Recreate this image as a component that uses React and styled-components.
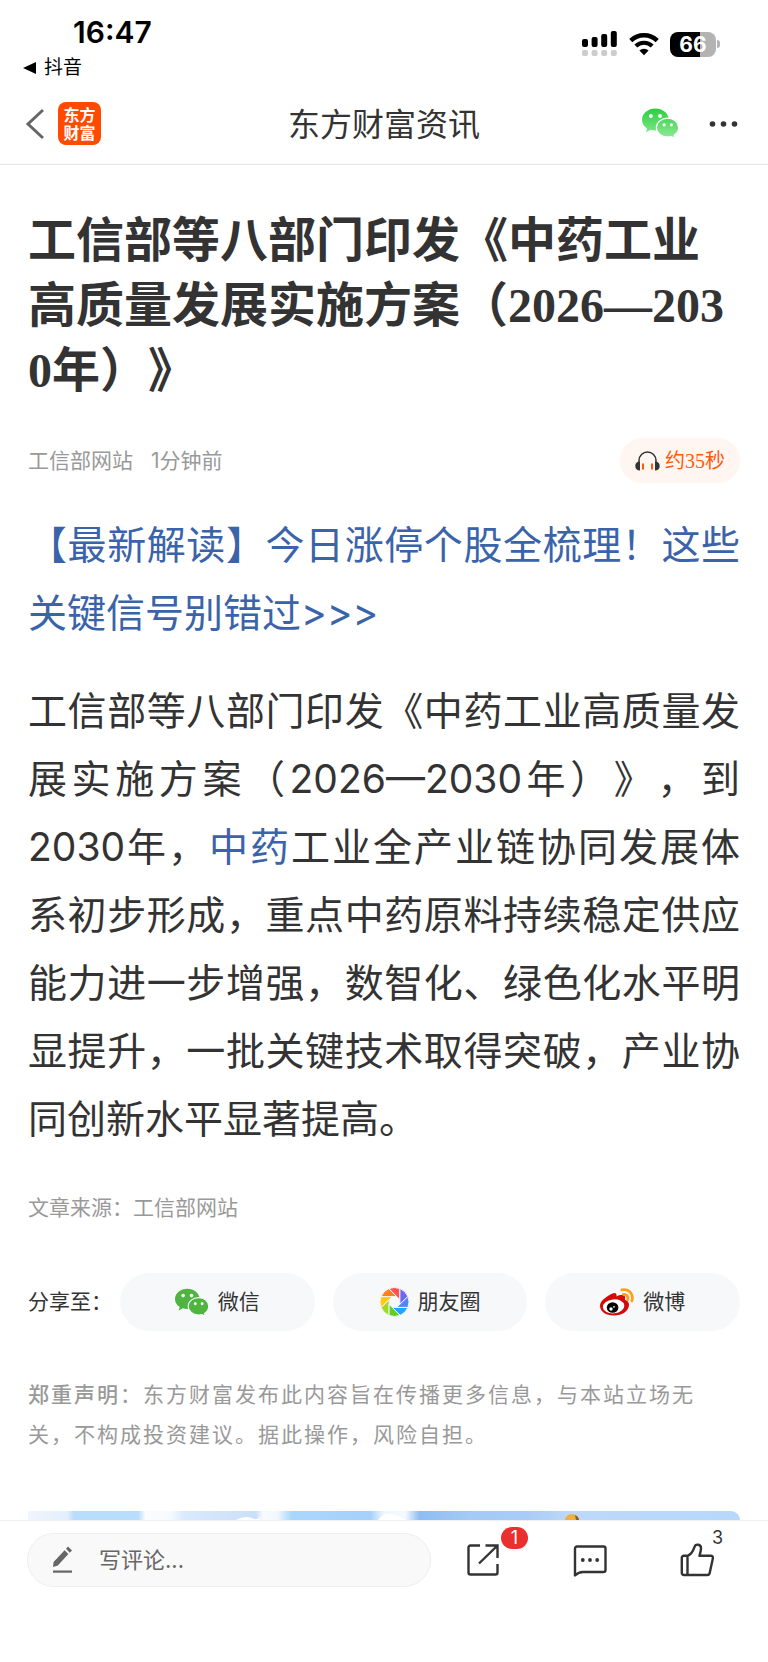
import React, { useState } from 'react';
import styled, { createGlobalStyle } from 'styled-components';

const GlobalStyle = createGlobalStyle`
  * {
    box-sizing: border-box;
  }

  body {
    margin: 0;
    background: #fff;
    color: #333;
    font-family: Inter, 'Noto Sans CJK SC', sans-serif;
    text-spacing-trim: space-all;
  }

  svg {
    display: block;
    flex-shrink: 0;
  }

  button,
  input {
    font-family: inherit;
    color: inherit;
  }
`;

const Container = styled.div`
  display: flex;
  flex-direction: column;
  min-height: 100vh;
`;

const StatusBar = styled.div`
  display: flex;
  justify-content: space-between;
  padding: 14px 48px 0 23px;
  color: #000;
`;

const StatusLeft = styled.div`
  display: flex;
  flex-direction: column;
  align-items: flex-start;
  gap: 2px;
`;

const Time = styled.div`
  padding-left: 50px;
  font-size: 30px;
  font-weight: 600;
  line-height: 36px;
`;

const BackToApp = styled.a`
  display: flex;
  align-items: center;
  gap: 8px;
  font-size: 19px;
  line-height: 31px;
  color: inherit;
  text-decoration: none;
`;

const StatusRight = styled.div`
  display: flex;
  align-items: center;
  gap: 11px;
  height: 60px;
`;

const BatteryWrap = styled.div`
  display: flex;
  align-items: center;
  gap: 1px;
`;

const Battery = styled.div`
  width: 46px;
  border-radius: 8px;
  background: linear-gradient(90deg, #000 66%, #b3b3b3 66%);
  color: #fff;
  font-size: 21px;
  font-weight: 700;
  line-height: 25px;
  text-align: center;
`;

const BatteryTip = styled.div`
  width: 3px;
  height: 8px;
  border-radius: 0 4px 4px 0;
  background: #b3b3b3;
`;

const Nav = styled.header`
  display: grid;
  grid-template-columns: 1fr auto 1fr;
  align-items: center;
  height: 82px;
  padding: 0 24px;
  border-bottom: 1px solid #e6e6e6;
`;

const NavGroup = styled.div`
  display: flex;
  align-items: center;
  gap: 12px;
`;

const NavActions = styled(NavGroup)`
  justify-content: flex-end;
  gap: 30px;
  padding-right: 6px;
`;

const NavTitle = styled.div`
  padding-top: 2px;
  font-size: 32px;
  line-height: 40px;
`;

const IconButton = styled.button`
  display: flex;
  padding: 0;
  border: none;
  background: none;
  cursor: pointer;
`;

const Logo = styled.a`
  display: flex;
  align-items: center;
  justify-content: center;
  width: 43px;
  height: 43px;
  border-radius: 8px;
  background: #ff4a00;
  color: #fff;
  font-size: 16px;
  font-weight: 700;
  line-height: 18px;
  text-align: center;
  text-decoration: none;
`;

const Article = styled.article`
  padding: 43px 28px 0;
`;

const Title = styled.h1`
  margin: 0;
  font-family: 'Liberation Serif', 'Noto Sans CJK SC', serif;
  font-size: 48px;
  font-weight: 700;
  line-height: 65px;
  word-break: break-all;
`;

const Meta = styled.div`
  display: flex;
  align-items: center;
  gap: 18px;
  margin-top: 35px;
  color: #999;
  font-size: 21px;
  line-height: 30px;
`;

const Listen = styled.button`
  display: flex;
  align-items: center;
  gap: 5px;
  height: 45px;
  margin-left: auto;
  padding: 0 15px;
  border: none;
  border-radius: 23px;
  background: #fff5f1;
  color: #ff5a0a;
  font-family: 'Liberation Serif', 'Noto Sans CJK SC', serif;
  font-size: 20px;
  line-height: 30px;
  cursor: pointer;
`;

const Content = styled.div`
  margin-top: 28px;
  font-size: 39px;
  line-height: 68px;
  text-align: justify;
`;

const Paragraph = styled.p`
  margin: 0 0 30px;
`;

const TextLink = styled.a`
  color: #3a63a9;
  text-decoration: none;
`;

const Source = styled.div`
  margin-top: 40px;
  color: #999;
  font-size: 21px;
  line-height: 30px;
`;

const Share = styled.div`
  display: flex;
  align-items: center;
  gap: 18px;
  margin-top: 50px;
  font-size: 21px;
  line-height: 30px;
`;

const ShareLabel = styled.span`
  width: 74px;
  white-space: nowrap;
`;

const ShareButton = styled.button`
  flex: 1;
  display: flex;
  align-items: center;
  justify-content: center;
  gap: 9px;
  height: 58px;
  padding: 0;
  border: none;
  border-radius: 29px;
  background: #f6f8fa;
  font-size: 21px;
  line-height: 30px;
  cursor: pointer;
`;

const Disclaimer = styled.p`
  margin: 44px 0 0;
  color: #999;
  font-size: 21px;
  letter-spacing: 2px;
  line-height: 40px;
`;

const Strong = styled.strong`
  font-weight: 500;
`;

const Banner = styled.a`
  display: block;
  height: 9px;
  margin-top: 56px;
  overflow: hidden;
  border-radius: 0 14px 0 0;
`;

const BottomBar = styled.footer`
  display: flex;
  align-items: flex-start;
  flex: 1;
  padding: 12px 54px 74px 27px;
  border-top: 1px solid #eee;
  background: #fff;
`;

const CommentBox = styled.label`
  flex: 1;
  display: flex;
  align-items: center;
  gap: 25px;
  min-width: 0;
  height: 54px;
  padding: 0 24px;
  border: 1px solid #eee;
  border-radius: 27px;
  background: #f9f9f9;
`;

const CommentInput = styled.input`
  flex: 1;
  min-width: 0;
  padding: 0;
  border: none;
  outline: none;
  background: none;
  font-size: 22px;

  &::placeholder {
    color: #666;
    opacity: 1;
  }
`;

const Actions = styled.div`
  display: flex;
  align-items: center;
  gap: 73px;
  height: 54px;
  margin-left: 35px;
`;

const Action = styled(IconButton)`
  position: relative;
`;

const Badge = styled.span`
  position: absolute;
  left: 35px;
  bottom: 28px;
  width: 27px;
  border-radius: 11px;
  background: #ea2f2f;
  color: #fff;
  font-size: 18px;
  line-height: 22px;
  text-align: center;
`;

const Count = styled.span`
  position: absolute;
  left: 32px;
  bottom: 28px;
  font-size: 18px;
  line-height: 22px;
`;

const SignalIcon = () => (
  <svg width="36" height="26" viewBox="0 0 36 26">
    {[0, 1, 2, 3].map((i) => (
      <g key={i}>
        <rect
          x={i * 9.6}
          y={[8, 6, 3, 0][i]}
          width="6"
          height={[8, 10, 13, 16][i]}
          rx="2"
          fill="#000"
        />
        <rect x={i * 9.6} y="19" width="6" height="6" rx="2" fill="#ccc" />
      </g>
    ))}
  </svg>
);

const WifiIcon = () => (
  <svg width="30" height="24" viewBox="0 0 30 24" fill="none">
    <path d="M1.8 8.600a19 19 0 0 1 26.400 0" stroke="#000" strokeWidth="4.400" />
    <path d="M6.800 14a12 12 0 0 1 16.400 0" stroke="#000" strokeWidth="4.200" />
    <path d="M15 23.200l-4.600-4.600a6.800 6.800 0 0 1 9.200 0z" fill="#000" />
  </svg>
);

const WechatIcon = ({ width, height, from, to, halo }) => {
  const id = `wechat${from.slice(1)}`;

  return (
    <svg width={width} height={height} viewBox="0 0 36 30">
      <defs>
        <linearGradient id={id} x1="0" y1="0" x2="0" y2="30" gradientUnits="userSpaceOnUse">
          <stop offset="0" stopColor={from} />
          <stop offset="1" stopColor={to} />
        </linearGradient>
      </defs>
      <path
        fill={`url(#${id})`}
        d="M13 .5C5.8.5 0 5.3 0 11.300c0 3.500 1.900 6.500 5 8.500L3.800 23.600l4.600-2.400c1.500.4 3 .6 4.600.6 7.200 0 13-4.700 13-10.600S20.200.5 13 .5z"
      />
      <path
        fill={`url(#${id})`}
        stroke={halo}
        strokeWidth="1.200"
        d="M25 9.800c-6.200 0-11 4.100-11 9.200s4.800 9.200 11 9.200c1.300 0 2.500-.2 3.700-.5l3.500 1.900-.9-3.100c2.700-1.700 4.400-4.400 4.400-7.500 0-5.100-4.700-9.200-10.700-9.200z"
      />
      <circle cx="8.600" cy="7.700" r="1.900" fill="#fff" />
      <circle cx="17.500" cy="7.700" r="1.900" fill="#fff" />
      <circle cx="21.500" cy="16.300" r="1.500" fill="#fff" />
      <circle cx="28.700" cy="16.300" r="1.500" fill="#fff" />
    </svg>
  );
};

const bladeColors = [
  '#ff5252',
  '#ff7f1a',
  '#ffc815',
  '#a2d729',
  '#5fd01f',
  '#1fa6ff',
  '#5584f7',
  '#6b69f0',
];

const point = (radius, degrees) => {
  const angle = (degrees * Math.PI) / 180;
  return `${15 + radius * Math.cos(angle)} ${15 - radius * Math.sin(angle)}`;
};

const MomentsIcon = () => (
  <svg width="29" height="30" viewBox="0 0 30 30">
    {bladeColors.map((color, i) => (
      <path
        key={color}
        fill={color}
        stroke="#f6f8fa"
        strokeWidth="1"
        d={`M${point(6, 22.5 + i * 45)} L${point(15, 68 + i * 45)} A15 15 0 0 0 ${point(
          15,
          113 + i * 45
        )} Z`}
      />
    ))}
  </svg>
);

const WeiboIcon = () => (
  <svg width="34" height="28" viewBox="0 0 34 28">
    <path
      fill="#d20a0a"
      d="M12.500 5.500c2.500-1.200 4.500-.5 4 2.900 3.400-1.600 7.400-1.900 8.400.2.500 1 .3 2-.1 3.100 2.500.8 4.200 2.500 4.200 5C29 22.800 22.400 27.500 14 27.500S0 23.400 0 17.700C0 12.900 7 7.900 12.500 5.500z"
    />
    <ellipse cx="13.600" cy="18.400" rx="10.800" ry="7" fill="#fff" transform="rotate(-6 13.600 18.400)" />
    <ellipse cx="12.600" cy="19.500" rx="5.800" ry="5.300" fill="#000" />
    <circle cx="11" cy="21" r="1.700" fill="#fff" />
    <circle cx="14" cy="18.800" r="0.900" fill="#fff" />
    <path
      d="M23.300 6.400c3.300-.4 5.300 2.300 4.500 5.200M21.800 1.900c7-1.500 12.400 4.500 10 11"
      fill="none"
      stroke="#ff9f1c"
      strokeWidth="2.800"
      strokeLinecap="round"
    />
  </svg>
);

const HeadphoneIcon = () => (
  <svg width="25" height="20" viewBox="0 0 25 20">
    <path d="M4 13V9.500a8.500 8.500 0 0 1 17 0V13" fill="none" stroke="#333" strokeWidth="1.500" />
    <path d="M5 10.500v9C2 19.500.3 17.800.3 15S2 10.500 5 10.500zM20 10.500v9c3 0 4.700-1.700 4.700-4.500S23 10.500 20 10.500z" fill="#333" />
    <path d="M8 12.500v6M17 12.500v6" stroke="#ff5a0a" strokeWidth="2" />
  </svg>
);

const PencilIcon = () => (
  <svg width="22" height="28" viewBox="0 0 22 28" fill="#666">
    <path d="M12.600 4.200l3.800 3.800L5.800 19.400 1 21l.6-5zM14 2.800L16 .6l4 3.800-2.200 2.300z" />
    <rect x="1" y="24.500" width="19" height="2.200" />
  </svg>
);

const ShareIcon = () => (
  <svg width="34" height="34" viewBox="0 0 34 34" fill="none" stroke="#333" strokeWidth="2.400">
    <path d="M14 2.500H4.500a2 2 0 0 0-2 2v25a2 2 0 0 0 2 2h25a2 2 0 0 0 2-2V21M19.500 2.500h12V15M31 3L13 20.500" />
  </svg>
);

const CommentIcon = () => (
  <svg width="34" height="34" viewBox="0 0 34 34">
    <path
      d="M4 3.500h26.500a2 2 0 0 1 2 2V27a2 2 0 0 1-2 2H10c-3 0-5.500 1-8 3.500v-27a2 2 0 0 1 2-2z"
      fill="none"
      stroke="#333"
      strokeWidth="2.400"
      strokeLinejoin="round"
    />
    <circle cx="9.800" cy="17" r="1.900" fill="#333" />
    <circle cx="17" cy="17" r="1.900" fill="#333" />
    <circle cx="24.200" cy="17" r="1.900" fill="#333" />
  </svg>
);

const LikeIcon = () => (
  <svg width="34" height="34" viewBox="0 0 34 34" fill="none" stroke="#333" strokeWidth="2.400" strokeLinejoin="round">
    <path d="M7.500 12.800c4-1.300 5.500-4.300 6.900-8.600 1.200-4 6.900-3 6.600 1.200-.1 2.600-.8 4.700-1.500 7.400h11.400a2 2 0 0 1 2 2.400l-3.200 14.800a2.500 2.500 0 0 1-2.400 2H3.800a2 2 0 0 1-2-2V14.800a2 2 0 0 1 2-2zV32" />
  </svg>
);

const BannerArt = () => (
  <svg width="100%" height="9" viewBox="0 0 712 9" preserveAspectRatio="none">
    <defs>
      <linearGradient id="sky" x1="0" x2="1" y1="0" y2="0">
        <stop offset="0" stopColor="#f1f5fd" />
        <stop offset="0.055" stopColor="#e2effc" />
        <stop offset="0.065" stopColor="#b8dcfb" />
        <stop offset="0.155" stopColor="#b9ddfc" />
        <stop offset="0.165" stopColor="#fbfcff" />
        <stop offset="0.2" stopColor="#f6faff" />
        <stop offset="0.22" stopColor="#d9eafd" />
        <stop offset="0.32" stopColor="#cadffa" />
        <stop offset="0.33" stopColor="#f8fbff" />
        <stop offset="0.35" stopColor="#f2f8ff" />
        <stop offset="0.37" stopColor="#abd6fc" />
        <stop offset="0.48" stopColor="#a5d0fb" />
        <stop offset="0.5" stopColor="#eef6ff" />
        <stop offset="0.53" stopColor="#f4f9ff" />
        <stop offset="0.55" stopColor="#8ebcf3" />
        <stop offset="0.62" stopColor="#a4caf6" />
        <stop offset="0.7" stopColor="#a9cbf7" />
        <stop offset="0.76" stopColor="#bdd8fa" />
        <stop offset="1" stopColor="#b7d8fb" />
      </linearGradient>
    </defs>
    <rect width="712" height="9" fill="url(#sky)" />
    <path d="M208 9q8-5 16-2t8-3v5zM350 9q6-8 14-6t14 6z" fill="#fff" />
    <ellipse cx="544" cy="9" rx="7" ry="6" fill="#f0b040" />
    <path d="M547 4q4 2 4 5h-3z" fill="#8a6030" />
  </svg>
);

const shareTargets = [
  {
    name: '微信',
    icon: <WechatIcon width="34" height="29" from="#50b440" to="#50b441" halo="#f6f8fa" />,
  },
  { name: '朋友圈', icon: <MomentsIcon /> },
  { name: '微博', icon: <WeiboIcon /> },
];

const App = () => {
  const [comment, setComment] = useState('');

  return (
    <>
      <GlobalStyle />
      <Container>
        <StatusBar>
          <StatusLeft>
            <Time>16:47</Time>
            <BackToApp href="#">
              <svg width="13" height="12" viewBox="0 0 13 12">
                <path d="M0 6L13 0v12z" />
              </svg>
              抖音
            </BackToApp>
          </StatusLeft>
          <StatusRight>
            <SignalIcon />
            <WifiIcon />
            <BatteryWrap>
              <Battery>66</Battery>
              <BatteryTip />
            </BatteryWrap>
          </StatusRight>
        </StatusBar>
        <Nav>
          <NavGroup>
            <IconButton aria-label="返回">
              <svg width="22" height="32" viewBox="0 0 22 32" fill="none" stroke="#666" strokeWidth="3">
                <path d="M19 2L4 16l15 14" />
              </svg>
            </IconButton>
            <Logo href="#">
              东方
              <br />
              财富
            </Logo>
          </NavGroup>
          <NavTitle>东方财富资讯</NavTitle>
          <NavActions>
            <IconButton aria-label="微信">
              <WechatIcon width="37" height="31" from="#27cf3d" to="#94eb9b" halo="#fff" />
            </IconButton>
            <IconButton aria-label="更多">
              <svg width="29" height="8" viewBox="0 0 29 8" fill="#333">
                <circle cx="3.500" cy="4" r="2.800" />
                <circle cx="14.500" cy="4" r="2.800" />
                <circle cx="25.500" cy="4" r="2.800" />
              </svg>
            </IconButton>
          </NavActions>
        </Nav>
        <Article>
          <Title>工信部等八部门印发《中药工业高质量发展实施方案（2026—2030年）》</Title>
          <Meta>
            <span>工信部网站</span>
            <span>1分钟前</span>
            <Listen>
              <HeadphoneIcon />
              约35秒
            </Listen>
          </Meta>
          <Content>
            <Paragraph>
              <TextLink href="#">【最新解读】今日涨停个股全梳理！这些关键信号别错过&gt;&gt;&gt;</TextLink>
            </Paragraph>
            <Paragraph>
              工信部等八部门印发《中药工业高质量发展实施方案（2026—2030年）》，到2030年，
              <TextLink href="#">中药</TextLink>
              工业全产业链协同发展体系初步形成，重点中药原料持续稳定供应能力进一步增强，数智化、绿色化水平明显提升，一批关键技术取得突破，产业协同创新水平显著提高。
            </Paragraph>
          </Content>
          <Source>文章来源：工信部网站</Source>
          <Share>
            <ShareLabel>分享至：</ShareLabel>
            {shareTargets.map((item) => (
              <ShareButton key={item.name}>
                {item.icon}
                {item.name}
              </ShareButton>
            ))}
          </Share>
          <Disclaimer>
            <Strong>郑重声明</Strong>
            ：东方财富发布此内容旨在传播更多信息，与本站立场无关，不构成投资建议。据此操作，风险自担。
          </Disclaimer>
          <Banner href="#" aria-label="banner">
            <BannerArt />
          </Banner>
        </Article>
        <BottomBar>
          <CommentBox>
            <PencilIcon />
            <CommentInput
              type="text"
              aria-label="写评论"
              placeholder="写评论..."
              value={comment}
              onChange={(e) => setComment(e.target.value)}
            />
          </CommentBox>
          <Actions>
            <Action aria-label="分享">
              <ShareIcon />
              <Badge>1</Badge>
            </Action>
            <Action aria-label="评论">
              <CommentIcon />
            </Action>
            <Action aria-label="点赞">
              <LikeIcon />
              <Count>3</Count>
            </Action>
          </Actions>
        </BottomBar>
      </Container>
    </>
  );
};

export default App;
